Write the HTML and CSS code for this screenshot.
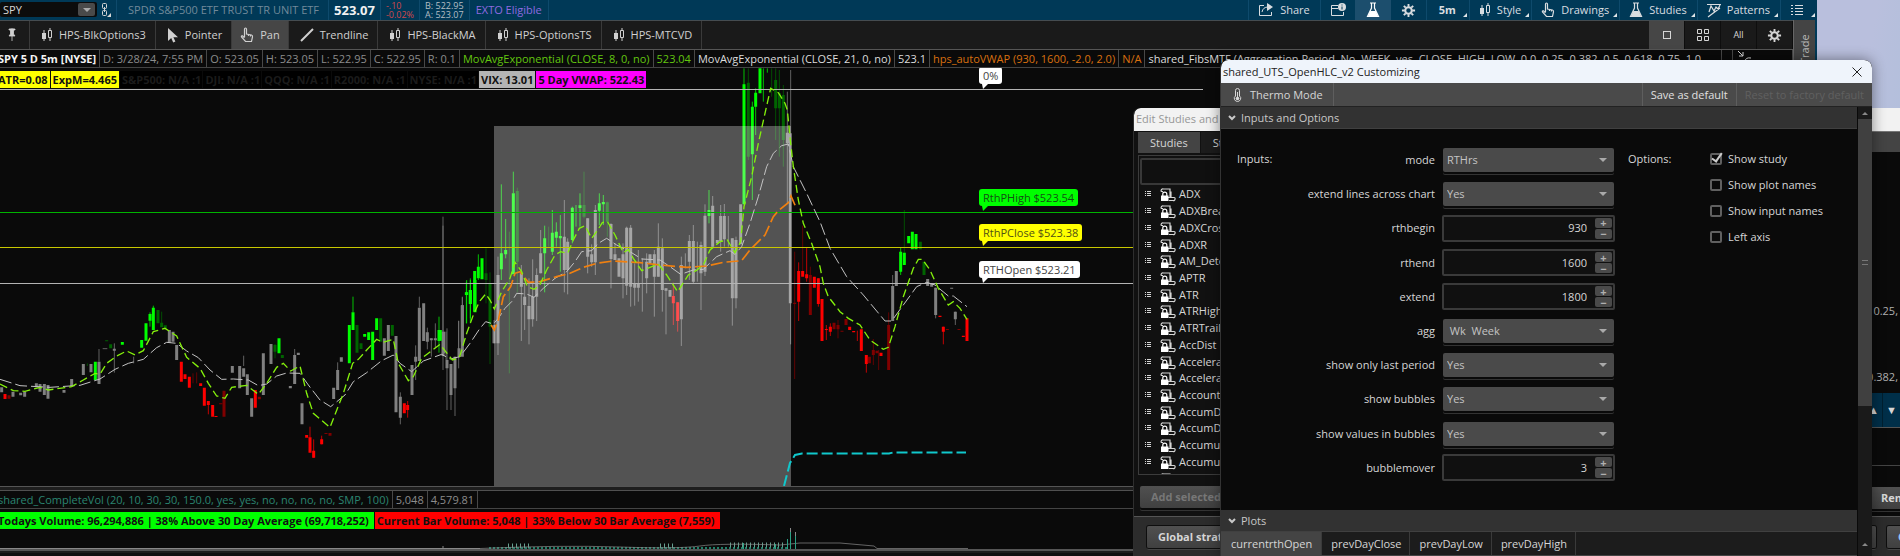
FILE: index.html
```html
<!DOCTYPE html>
<html lang="en">
<head>
<meta charset="utf-8">
<title>Charts</title>
<link rel="stylesheet" href="styles.css">
</head>
<body>
<svg class="defs" aria-hidden="true">
  <symbol id="candles" viewBox="0 0 12 14"><path d="M3 2v11M9 0v2M9 10v3" stroke="currentColor" fill="none"/><path d="M1 5h4v6H1z" fill="currentColor"/><path d="M7.500 2.500h3v7h-3z" fill="none" stroke="currentColor"/></symbol>
  <symbol id="hand" viewBox="0 0 14 16"><path d="M4.500 10V2.200q0-1.200 1-1.200t1 1.200V7l5 1q1.300.4 1 2l-1 4.500H5.500L1.500 10q-.5-1.500 1-1.200l2 2M8.500 7.300V9M10.500 7.800V9.500" fill="none" stroke="currentColor" stroke-width="1.200"/></symbol>
  <symbol id="flask" viewBox="0 0 14 16"><path d="M4 1h6M5.500 1v5L1.500 14.500h11L8.500 6V1" fill="none" stroke="currentColor" stroke-width="1.200"/><path d="M4.300 9h5.400l2.500 5.500H1.800z" fill="currentColor"/></symbol>
  <symbol id="gear" viewBox="0 0 16 16"><circle cx="8" cy="8" r="3.500" fill="none" stroke="currentColor" stroke-width="2.200"/><path d="M8 1v3M8 12v3M1 8h3M12 8h3M3 3l2 2M11 11l2 2M13 3l-2 2M5 11l-2 2" stroke="currentColor" stroke-width="2"/></symbol>
  <symbol id="list" viewBox="0 0 12 12"><path d="M0 1.500h2M4 1.500h8M0 4.500h2M4 4.500h8M0 7.500h2M4 7.500h8M0 10.500h2M4 10.500h8" stroke="currentColor"/></symbol>
  <symbol id="rows" viewBox="0 0 6 6"><path d="M0 .5h1M2 .5h4M0 2.500h1M2 2.500h4M0 4.500h1M2 4.500h4" stroke="currentColor"/></symbol>
  <symbol id="script" viewBox="0 0 16 14"><path d="M1 3.500q0-3 2.500-2.500h6.500v8M1 3.500h2M8 9.500h6q1.500 0 1 1.800t-2 1.200H9M10 4h1v5" fill="none" stroke="currentColor" stroke-width="1.200"/><path d="M1 7.500h7.500V13H1z" fill="#fff"/><path d="M2.800 8V6q0-1.800 2-1.800t2 1.800v2" fill="none" stroke="#fff" stroke-width="1.200"/></symbol>
</svg>

<main class="app">
  <header class="symbolbar">
    <div class="ticker">
      <input class="ticker-input" aria-label="Symbol" value="SPY">
      <button class="drop" aria-label="Choose symbol"></button>
    </div>
    <button class="link-btn" aria-label="Link color"><svg width="12" height="16" viewBox="0 0 12 16" fill="none" stroke="currentColor"><rect x="1.500" y="1.500" width="4" height="5" rx="1"/><rect x="1.500" y="8.500" width="4" height="5" rx="1"/><path d="M3.500 5v5"/><path d="M10 11v4H6z" fill="currentColor" stroke="none"/></svg></button>
    <div class="hcell name">SPDR S&amp;P500 ETF TRUST TR UNIT ETF</div>
    <div class="hcell last">523.07</div>
    <div class="hcell stack neg"><span>-.10</span><span>-0.02%</span></div>
    <div class="hcell stack quote"><span>B: 522.95</span><span>A: 523.07</span></div>
    <div class="hcell exto">EXTO Eligible</div>
    <nav class="tools">
      <button class="tool share"><svg width="16" height="14" viewBox="0 0 16 14" fill="none" stroke="currentColor"><path d="M6 2.500H1.500v10h12V9M4 9q1-5 6-5"/><path d="M9 0l6 4-6 4z" fill="currentColor" stroke="none"/></svg>Share</button>
      <button class="tool only" aria-label="News"><svg width="16" height="14" viewBox="0 0 16 14" fill="none" stroke="currentColor"><path d="M8 2.500H1.500v10h12V9M1 5.500h7"/><circle cx="12" cy="4" r="4" fill="currentColor" stroke="none"/><path d="M12 1.500v1M12 3.500v3" stroke="#003957"/></svg></button>
      <button class="tool only on" aria-label="Edit studies"><svg width="14" height="16"><use href="#flask"/></svg></button>
      <button class="tool only gear" aria-label="Settings"><svg width="15" height="15"><use href="#gear"/></svg></button>
      <button class="tool frame menu"><b>5m</b></button>
      <button class="tool menu"><svg width="12" height="14"><use href="#candles"/></svg>Style</button>
      <button class="tool menu"><svg width="14" height="16"><use href="#hand"/></svg>Drawings</button>
      <button class="tool menu"><svg width="14" height="16"><use href="#flask"/></svg>Studies</button>
      <button class="tool menu"><svg width="14" height="15" viewBox="0 0 14 15" fill="none" stroke="currentColor" stroke-width="1.200"><path d="M0 1.500h14M1 14L13 5M2 9l2-6 3 5 2-4 2 2 2-4"/></svg>Patterns</button>
      <button class="tool listbtn menu" aria-label="Menu"><svg width="12" height="12"><use href="#list"/></svg></button>
    </nav>
  </header>

  <div class="below">
    <div class="workspace">
      <div class="drawbar">
        <button class="dtool pin" aria-label="Pin"><svg width="8" height="14" viewBox="0 0 8 14"><path d="M1 1h6v1H1zM2.500 1h3v5l1.500 2H1l1.500-2zM4 8v5" fill="currentColor" stroke="currentColor" stroke-width=".8"/></svg></button>
        <button class="dtool"><svg width="12" height="14"><use href="#candles"/></svg>HPS-BlkOptions3</button>
        <button class="dtool"><svg width="12" height="15" viewBox="0 0 12 15"><path d="M1 0v13l3.200-3 2 4.500 2.200-1-2-4.300H11z" fill="currentColor"/></svg>Pointer</button>
        <button class="dtool pan"><svg width="14" height="16"><use href="#hand"/></svg>Pan</button>
        <button class="dtool trend"><svg width="14" height="14" viewBox="0 0 14 14"><path d="M1 13L13 1" stroke="currentColor" stroke-width="2"/></svg>Trendline</button>
        <button class="dtool"><svg width="12" height="14"><use href="#candles"/></svg>HPS-BlackMA</button>
        <button class="dtool"><svg width="12" height="14"><use href="#candles"/></svg>HPS-OptionsTS</button>
        <button class="dtool"><svg width="12" height="14"><use href="#candles"/></svg>HPS-MTCVD</button>
        <div class="views">
          <button class="view on" aria-label="Single chart"><svg width="8" height="8"><rect x=".5" y=".5" width="7" height="7" fill="none" stroke="currentColor"/></svg></button>
          <button class="view" aria-label="Chart grid"><svg width="12" height="12" fill="none" stroke="currentColor"><path d="M.5.5h4v4h-4zM7.500.5h4v4h-4zM.5 7.500h4v4h-4zM7.500 7.500h4v4h-4z"/></svg></button>
          <button class="view small">All</button>
          <button class="view" aria-label="Grid settings"><svg width="15" height="15"><use href="#gear"/></svg></button>
        </div>
      </div>

      <div class="info">
        <span class="cut title">SPY 5 D 5m [NYSE]</span><span>D: 3/28/24, 7:55 PM</span><span>O: 523.05</span><span>H: 523.05</span><span>L: 522.95</span><span>C: 522.95</span><span>R: 0.1</span><span class="lime">MovAvgExponential (CLOSE, 8, 0, no)</span><span class="lime">523.04</span><span class="white">MovAvgExponential (CLOSE, 21, 0, no)</span><span class="white">523.1</span><span class="orange">hps_autoVWAP (930, 1600, -2.0, 2.0)</span><span class="orange">N/A</span><span class="white fibs">shared_FibsMTF (Aggregation Period, No, WEEK, yes, CLOSE, HIGH, LOW, 0.0, 0.25, 0.382, 0.5, 0.618, 0.75, 1.0</span><span class="gap"></span><span class="collapse"><svg width="16" height="14" viewBox="0 0 16 14" fill="none" stroke="#ddd"><path d="M2 1l5 5M7 2v4H3M9 12q0-5 6-4"/></svg></span>
      </div>

      <section class="chart">
        <svg class="plot">
          <g transform="translate(0 -8) scale(.33333)">
            <g class="wick">
              <path class="k" d="M297 867V905M343 850V938M401 890V910M731 887V918M884 867V972M1013 907V990M1201 997V1093M1247 856V960M1258 710V743M1282 803V868M1294 835V890M1306 790V865M1329 470V930M1341 805V1050M1353 912V1050M1365 890V1068M1376 782V925M1387 710V735M308 866h14"/>
              <path class="g" d="M460 737V745M450 757V800M1059 710V757M1400 660V790M1411 660V775M1317 770V878"/>
              <path class="dg" d="M485 755V790M825 852V895M262 910v8"/>
              <path class="r" d="M625 1023V1063M930 1100V1132M941 1138V1193M965 1127V1153M1223 1023V1073"/>
              <path class="dr" d="M579 940V970M590 937V970"/>
            </g>
            <g class="body">
              <path class="k" d="M5 982V997M39 995V1010M62 998V1006M74 995V1010M109 970V982M120 972V995M133 972V1005M144 975V1016M192 990V998M215 957V978M250 912V945M273 912V937M297 905V972M343 866V872M508 810V848M519 815V845M530 855V900M697 918V938M719 918V985M731 925V950M742 943V1005M755 1015V1070M790 880V1005M813 852V912M871 978V985M884 885V972M895 878V885M906 1030V1093M1001 983V1017M1013 930V990M1024 892V905M1153 835V887M1165 795V873M1188 828V1057M1201 1010V1073M1236 915V1005M1247 890V905M1258 743V903M1271 730V843M1282 817V845M1329 815V888M1341 900V925M1353 912V1005M1365 890V985M1387 735V890M1306 835v6M1294 835v6"/>
              <path class="g" d="M286 905V960M367 846V854M425 840V863M438 790V842M450 762V782M460 743V810M837 835V880M1048 795V910M1059 757V810M1094 822V830M1106 817V840M1118 815V900M1130 775V810M1317 810V843M1400 697V705M1411 690V732M1425 660V757"/>
              <path class="dg" d="M332 853V865M474 750V790M485 788V802M496 796V805M847 885V894M1071 795V878M1083 850V867M1142 775V845M1177 795V827M825 855V875M320 841v3"/>
              <path class="r" d="M15 1002V1017M544 905V965M555 943V957M568 950V983M602 970V978M613 983V1037M625 1023V1035M638 1035V1070M648 1068v3M766 990V1043M920 1125V1133M930 1132V1178M941 1172V1193M965 1138V1153M1213 1030V1060M1223 1035V1050"/>
              <path class="dr" d="M672 992V1070M778 1010V1018M990 1119V1127M27 1006v10M978 1119v3M662 1030v3"/>
            </g>
          </g>
          <g transform="translate(440 -8) scale(.33333)">
            <g class="wick">
              <path class="k" d="M9 497V815M18 815V900M56 783V890M67 712V740M162 780V850M174 590V885M244 615V843M254 670V810M267 655V853M278 598V800M290 625V783M302 510V640M373 420V697M383 535V703M443 475V640M455 553V620M466 435V645M513 490V685M525 550V600M549 550V715M560 500V705M572 495V740M584 610V737M595 570V725M607 595V755M620 580V700M643 570V770M655 490V650M667 535V755M678 685V823M724 590V858M736 580V625M748 525V660M760 495V670M772 545V665M783 545V750M795 433V648M818 408V560M842 435V575M853 432V560M865 468V560M877 535V797M888 530V745M1042 95V430M1052 30V853"/>
              <path class="g" d="M79 665V790M91 655V790M115 583V660M184 373V660M197 477V595M220 335V400M314 497V697M337 450V585M349 487V560M361 465V635M397 440V550M408 435V500M420 400V500M478 400V495M490 405V495M807 390V490M912 25V433M937 125V420M947 85V225M970 25V125M982 25V38"/>
              <path class="dg" d="M138 565V730M150 637V912M208 515V940M232 383V697M326 500V560M432 335V475M502 425V530M925 25V300M995 25V110M1007 25V240M1018 30V290M1030 75V320"/>
              <path class="r" d="M700 668V795M713 727V815"/>
            </g>
            <g class="body">
              <path class="k" d="M67 737V845M11 815V880M57 865V890M162 795V850M174 645V850M244 640V680M254 710V735M267 738V778M278 710V778M290 645V710M302 580V640M373 530V630M383 545V630M443 475V590M455 583V607M466 450V607M513 492V597M525 583V600M537 595V650M549 583V655M560 503V677M572 503V680M584 672V683M595 672V683M620 605V655M630 583V610M643 583V650M655 560V650M667 565V690M690 690V710M678 685V692M724 615V778M748 543V605M760 543V665M783 555V640M795 467V635M818 437V560M832 540V550M842 468V543M853 468V538M877 535V715M888 540V715M902 433V553M1042 218V250M1051 220V730"/>
              <path class="g" d="M1 810V842M79 697V705M91 690V732M104 633V755M115 620V655M126 595V658M184 580V628M197 570V583M220 400V643M314 535V580M337 518V575M349 515V533M361 528V535M397 443V540M420 436V444M478 430V452M490 426V433M807 450V468M912 73V433M937 140V283M947 98V140M960 25V100"/>
              <path class="dg" d="M138 640V660M150 670V800M232 393V605M432 435V470M502 427V485M925 68V290M1007 60V145M1018 100V145M1030 105V240"/>
              <path class="r" d="M700 708V730M713 727V783"/>
            </g>
          </g>
          <g transform="translate(760 -8) scale(.33333)">
            <g class="wick">
              <path class="k" d="M398 645V783M586 755V795M527 683V775"/>
              <path class="g" d="M422 562V645"/>
              <path class="dg" d="M433 450V580"/>
              <path class="r" d="M116 607V783M140 562V665M175 655V740M199 795V840M211 790V828M292 812V843M319 885V938M550 800V853"/>
              <path class="dr" d="M104 575V957M128 497V633M151 620V765M234 780V835M340 837V915M356 870V930M386 757V900"/>
            </g>
            <g class="body">
              <path class="k" d="M398 678V783M409 633V678M503 657V678M515 672v8M527 683V765M575 683v3M586 755V778"/>
              <path class="g" d="M422 575V635M433 578V615M446 528V550M457 515V568M468 522V568"/>
              <path class="dg" d="M481 545V568M492 605V645"/>
              <path class="r" d="M116 633V725M128 633V650M140 643V655M163 650V683M175 655V732M186 717V843M199 807v3M211 800V815M269 800V810M281 813v4M304 808V873M319 885V912M363 878V888M540 767v4M550 800V815M610 827v4M621 775V843"/>
              <path class="dr" d="M104 728v4M151 645V765M222 788V808M234 795V808M246 812v3M258 777V795M328 890V910M340 870V885M351 872V880M386 795V930M562 807v3M597 807v3"/>
            </g>
          </g>
          <rect class="session" x="494" y="58" width="297" height="360"/>
          <path class="lw" d="M0 21.500H1203"/>
          <line class="lg" x1="0" x2="100%" y1="144.500" y2="144.500"/>
          <line class="ly" x1="0" x2="100%" y1="179.500" y2="179.500"/>
          <line class="lw" x1="0" x2="100%" y1="215.500" y2="215.500"/>
          <g class="avg" transform="translate(0 -8) scale(.33333)">
            <polyline class="slow" points="0,958 60,977 150,982 240,976 300,957 345,928 385,910 430,898 470,863 500,847 530,850 560,873 595,893 630,930 665,958 700,957 745,960 775,977 800,972 830,948 860,939 900,940 925,975 960,1020 992,1040 1035,1005 1060,965 1100,938 1145,902 1180,885 1200,910 1235,935 1270,903 1325,883 1350,897 1380,890 1410,850 1440,805 1457,785 1480,792 1495,775 1515,745 1535,725 1550,700 1580,702 1602,712 1630,685 1665,655 1700,635 1725,605 1745,575 1775,572 1795,550 1820,535 1850,555 1890,575 1925,597 1980,600 2010,620 2042,643 2080,630 2110,628 2150,590 2190,572 2205,583 2225,560 2250,490 2275,410 2300,320 2320,280 2345,257 2365,252 2380,320 2420,400 2460,485 2490,565 2540,650 2590,705 2655,783 2675,783 2710,735 2750,680 2780,667 2805,675 2845,708 2860,708 2901,740"/>
            <polyline class="vwap" points="1473,795 1483,810 1495,780 1510,710 1532,680 1545,640 1560,635 1585,667 1620,665 1670,650 1710,640 1750,622 1790,610 1840,603 1920,608 1980,615 2060,622 2120,618 2170,607 2225,602 2250,570 2295,525 2320,470 2335,452 2365,428 2373,408 2387,440"/>
            <polyline class="fast" points="0,972 40,992 75,994 120,982 145,990 215,980 250,960 285,940 300,943 320,910 350,888 380,873 405,885 430,872 460,815 495,805 530,828 560,892 600,925 625,970 650,1008 675,1015 695,982 740,976 775,1003 800,970 830,922 850,910 872,933 900,918 920,1000 940,1060 990,1102 1030,1000 1058,910 1075,898 1100,870 1130,838 1148,847 1180,838 1195,910 1225,962 1240,950 1265,895 1320,853 1357,900 1378,893 1400,820 1420,765 1438,725 1457,702 1470,720 1483,747 1505,695 1530,655 1545,607 1565,635 1582,680 1602,688 1618,678 1640,630 1665,585 1682,575 1703,580 1720,540 1738,505 1755,497 1775,535 1790,515 1807,488 1822,484 1845,525 1870,578 1885,568 1900,595 1925,632 1950,622 1975,612 2000,645 2033,695 2065,645 2088,632 2110,615 2130,570 2160,545 2182,540 2205,578 2222,545 2232,440 2255,350 2275,250 2295,160 2312,85 2335,98 2355,130 2362,150 2371,240 2380,320 2395,420 2410,490 2435,550 2460,620 2470,670 2485,710 2520,755 2545,775 2580,795 2610,840 2650,868 2665,862 2685,800 2710,710 2740,625 2755,598 2767,598 2790,630 2815,685 2845,735 2860,725 2880,745 2901,778"/>
          </g>
          <path class="cyan" d="M784 418L790 395L795 387L802 385.500H889L893 384.500H966"/>
        </svg>
        <div class="bubble b0">0%</div>
        <div class="bubble b1">RthPHigh $523.54</div>
        <div class="bubble b2">RthPClose $523.38</div>
        <div class="bubble b3">RTHOpen $523.21</div>
        <div class="chips">
          <span class="chip yellow cut">ATR=0.08</span><span class="chip yellow">ExpM=4.465</span><span class="chip dark">S&amp;P500: N/A :1</span><span class="chip dark">DJI: N/A :1</span><span class="chip dark">QQQ: N/A :1</span><span class="chip dark">R2000: N/A :1</span><span class="chip dark">NYSE: N/A :1</span><span class="chip silver">VIX: 13.01</span><span class="chip magenta">5 Day VWAP: 522.43</span>
        </div>
      </section>

      <div class="splitter"></div>
      <div class="info">
        <span class="cut teal">shared_CompleteVol (20, 10, 30, 30, 150.0, yes, yes, no, no, no, no, SMP, 100)</span><span>5,048</span><span>4,579.81</span>
      </div>
      <section class="volume">
        <svg class="plot">
          <g fill="none">
            <path d="M489 39h300" stroke="#1f7f68" stroke-width="2" stroke-dasharray="2 2"/>
            <path d="M508 37h24M660 37h16M730 36h54" stroke="#66a090" stroke-width="5" stroke-dasharray="1 3"/>
            <path d="M480 39.500Q560 36 620 38T700 37T780 36L800 34H840L874 37L877 39.500H968" stroke="#8a8a8a" opacity=".7"/>
            <path d="M743.500 34v6M775.500 35v5M787.500 30v10M790.500 19v21M795.500 23v17" stroke="#2aa184"/>
            <path d="M790.500 19v4M795.500 23v4M0 39.500h480M443 39v-2" stroke="#888"/>
          </g>
        </svg>
        <div class="chips">
          <span class="chip green cut">Todays Volume: 96,294,886 | 38% Above 30 Day Average (69,718,252)</span><span class="chip red">Current Bar Volume: 5,048 | 33% Below 30 Bar Average (7,559)</span>
        </div>
      </section>
      <div class="axis"></div>
    </div>
    <aside class="rail"><span>Trade</span></aside>
  </div>
</main>

<section class="studies">
  <h2 class="titlebar">Edit Studies and Strategies</h2>
  <div class="studies-body">
    <div class="catalog">
      <div class="stabs"><button class="stab on">Studies</button><button class="stab">Strategies</button></div>
      <div class="picker">
        <input class="search" aria-label="Search studies">
        <ul class="names">
          <li><svg width="6" height="6"><use href="#rows"/></svg><svg width="16" height="14"><use href="#script"/></svg>ADX</li>
          <li><svg width="6" height="6"><use href="#rows"/></svg><svg width="16" height="14"><use href="#script"/></svg>ADXBreakouts</li>
          <li><svg width="6" height="6"><use href="#rows"/></svg><svg width="16" height="14"><use href="#script"/></svg>ADXCrossover</li>
          <li><svg width="6" height="6"><use href="#rows"/></svg><svg width="16" height="14"><use href="#script"/></svg>ADXR</li>
          <li><svg width="6" height="6"><use href="#rows"/></svg><svg width="16" height="14"><use href="#script"/></svg>AM_Detector</li>
          <li><svg width="6" height="6"><use href="#rows"/></svg><svg width="16" height="14"><use href="#script"/></svg>APTR</li>
          <li><svg width="6" height="6"><use href="#rows"/></svg><svg width="16" height="14"><use href="#script"/></svg>ATR</li>
          <li><svg width="6" height="6"><use href="#rows"/></svg><svg width="16" height="14"><use href="#script"/></svg>ATRHighLow</li>
          <li><svg width="6" height="6"><use href="#rows"/></svg><svg width="16" height="14"><use href="#script"/></svg>ATRTrailing</li>
          <li><svg width="6" height="6"><use href="#rows"/></svg><svg width="16" height="14"><use href="#script"/></svg>AccDist</li>
          <li><svg width="6" height="6"><use href="#rows"/></svg><svg width="16" height="14"><use href="#script"/></svg>Acceleration</li>
          <li><svg width="6" height="6"><use href="#rows"/></svg><svg width="16" height="14"><use href="#script"/></svg>Acceleration</li>
          <li><svg width="6" height="6"><use href="#rows"/></svg><svg width="16" height="14"><use href="#script"/></svg>Account</li>
          <li><svg width="6" height="6"><use href="#rows"/></svg><svg width="16" height="14"><use href="#script"/></svg>AccumDist</li>
          <li><svg width="6" height="6"><use href="#rows"/></svg><svg width="16" height="14"><use href="#script"/></svg>AccumDist</li>
          <li><svg width="6" height="6"><use href="#rows"/></svg><svg width="16" height="14"><use href="#script"/></svg>Accumulation</li>
          <li><svg width="6" height="6"><use href="#rows"/></svg><svg width="16" height="14"><use href="#script"/></svg>Accumulation</li>
          <li><svg width="6" height="6"><use href="#rows"/></svg><svg width="16" height="14"><use href="#script"/></svg>Adaptive</li>
        </ul>
      </div>
      <button class="push add" disabled>Add selected</button>
    </div>
    <div class="applied">
      <div class="applied-head"></div>
      <div class="applied-list"><span>0.25,</span><span>0.382,</span></div>
      <div class="mover"><button aria-label="Move up">▲</button><button aria-label="Move down">▼</button></div>
      <div class="detail"></div>
      <button class="push">Remove</button>
    </div>
  </div>
  <footer class="studies-foot"><button class="push">Global strategy settings...</button><span class="foot-right"><button class="push">OK</button><button class="push blue">Cancel</button></span></footer>
</section>

<section class="dialog" role="dialog" aria-labelledby="dlg-title">
  <div class="titlebar dlg-titlebar"><h2 id="dlg-title">shared_UTS_OpenHLC_v2 Customizing</h2><button class="close" aria-label="Close"><svg width="10" height="10" viewBox="0 0 10 10"><path d="M.5.5l9 9M9.500.5l-9 9" stroke="#222" fill="none"/></svg></button></div>
  <div class="dlg-tools">
    <button class="dt thermo"><svg width="9" height="14" viewBox="0 0 9 14" fill="none" stroke="currentColor"><path d="M2.500 8V2.500q0-2 2-2t2 2V8q2 1.500 1 3.500-1 2-3 2t-3-2q-1-2 1-3.500z"/><path d="M4.500 4v6"/><circle cx="4.500" cy="10.500" r="1.800" fill="currentColor" stroke="none"/></svg>Thermo Mode</button>
    <button class="dt save">Save as default</button>
    <button class="dt reset" disabled>Reset to factory default</button>
  </div>
  <div class="dlg-main">
    <div class="dlg-content">
      <h3 class="group"><svg width="8" height="6" viewBox="0 0 8 6"><path d="M1 1l3 3 3-3" stroke="currentColor" stroke-width="2" fill="none"/></svg>Inputs and Options</h3>
      <div class="form">
        <div class="caption">Inputs:</div>
        <div class="inputs">
          <label for="mode">mode</label><span class="sel"><select id="mode"><option>RTHrs</option></select></span>
          <label for="ext">extend lines across chart</label><span class="sel"><select id="ext"><option>Yes</option></select></span>
          <label for="rb">rthbegin</label><span class="num"><input id="rb" value="930"><button aria-label="Increase">+</button><button aria-label="Decrease">−</button></span>
          <label for="re">rthend</label><span class="num"><input id="re" value="1600"><button aria-label="Increase">+</button><button aria-label="Decrease">−</button></span>
          <label for="ex">extend</label><span class="num"><input id="ex" value="1800"><button aria-label="Increase">+</button><button aria-label="Decrease">−</button></span>
          <label for="agg">agg</label><span class="sel"><select id="agg"><option>&nbsp;Wk&nbsp;&nbsp;Week</option></select></span>
          <label for="lastp">show only last period</label><span class="sel"><select id="lastp"><option>Yes</option></select></span>
          <label for="sb">show bubbles</label><span class="sel"><select id="sb"><option>Yes</option></select></span>
          <label for="sv">show values in bubbles</label><span class="sel"><select id="sv"><option>Yes</option></select></span>
          <label for="bm">bubblemover</label><span class="num"><input id="bm" value="3"><button aria-label="Increase">+</button><button aria-label="Decrease">−</button></span>
        </div>
        <div class="caption opt">Options:</div>
        <div class="checks">
          <label><input type="checkbox" checked>Show study</label>
          <label><input type="checkbox">Show plot names</label>
          <label><input type="checkbox">Show input names</label>
          <label><input type="checkbox">Left axis</label>
        </div>
      </div>
      <h3 class="group plots"><svg width="8" height="6" viewBox="0 0 8 6"><path d="M1 1l3 3 3-3" stroke="currentColor" stroke-width="2" fill="none"/></svg>Plots</h3>
      <div class="ptabs"><button class="on">currentrthOpen</button><button>prevDayClose</button><button>prevDayLow</button><button>prevDayHigh</button></div>
    </div>
    <div class="scroll"><i class="tri"></i><div class="thumb"><i></i></div><div class="rest"><i class="tri"></i></div></div>
  </div>
</section>
</body>
</html>
```
FILE: styles.css
```css
* { box-sizing: border-box; }
body {
  margin: 0;
  height: 100vh;
  position: relative;
  overflow: hidden;
  background: linear-gradient(100deg, #b9bfdd 94%, #b1bfdb 97%, #bcc6e0);
  font: 11px/16px "Open Sans", "Noto Sans", sans-serif;
  color: #d6d6d6;
}
button, input, select { font: inherit; color: inherit; border: 0; margin: 0; padding: 0; background: none; }
h2, h3 { margin: 0; font: inherit; }
.defs { position: absolute; width: 0; height: 0; }

/* main chart window */
.app {
  height: 100%;
  margin-right: 83px;
  display: flex;
  flex-direction: column;
  background: #0a0a0a;
}
.symbolbar { display: flex; height: 20px; background: #003957; }
.ticker {
  display: flex;
  width: 97px;
  height: 15px;
  margin-top: 2px;
  padding: 1px;
  background: #0c0c0c;
  border-radius: 2px;
}
.ticker-input { width: 77px; padding-left: 2px; }
.drop { width: 17px; background: #4a4a4a; display: grid; place-items: center; border-radius: 2px; }
.drop::after, .sel::after { content: ""; border: 4px solid transparent; border-top-color: #aaa; border-bottom: 0; }
.link-btn { width: 19px; padding-left: 4px; display: flex; align-items: center; }
.hcell { display: flex; align-items: center; padding: 0 5px; border-left: 1px solid #0e4a6c; white-space: nowrap; }
.name { color: #71899a; padding: 0 9px 0 11px; }
.last { font-size: 13px; font-weight: 700; color: #f2f2f2; }
.stack { flex-direction: column; justify-content: center; align-items: flex-start; font-size: 9px; line-height: 9px; }
.neg { color: #d0484c; }
.quote { color: #b5bec4; }
.exto { color: #8f6ae0; padding: 0 6px; border-right: 1px solid #0e4a6c; }
.tools { margin-left: auto; display: flex; color: #d9dde0; }
.tool { position: relative; display: flex; align-items: center; gap: 6px; padding: 0 10px 0 9px; border-left: 1px solid #0e4a6c; }
.tool svg { flex: none; }
.only { padding: 0 9px; }
.only.on { background: #1c4e6d; color: #fff; padding: 0 11px; border: 0; }
.only.gear { padding: 0 10px; border: 0; }
.frame { padding: 0 13px 0 12px; }
.listbtn { padding: 0 14px 0 10px; }
.menu::after { content: ""; position: absolute; right: 2px; bottom: 3px; border: 2px solid #dfe5e8; border-top-color: transparent; border-left-color: transparent; }

.below { flex: 1; display: flex; min-height: 0; }
.workspace { flex: 1; min-width: 0; display: flex; flex-direction: column; }
.rail { width: 24px; background: #444; border-left: 1px solid #666; border-right: 2px solid #003957; display: flex; justify-content: center; padding-top: 12px; }
.rail span { writing-mode: vertical-rl; transform: rotate(180deg); height: 32px; color: #b8b8b8; }

.drawbar { display: flex; flex: none; height: 30px; background: #1a1a1a; border-top: 1px solid #454c50; border-bottom: 1px solid #555; }
.dtool { display: flex; align-items: center; gap: 6px; padding: 0 9px 0 11px; border-right: 1px solid #3a3a3a; color: #d0d0d0; white-space: nowrap; }
.dtool svg { flex: none; }
.pin { padding: 0 13px 0 8px; }
.pan { background: #464646; padding: 0 8px; }
.views { margin-left: auto; display: flex; }
.view { width: 36px; display: grid; place-items: center; border-right: 1px solid #0e0e0e; }
.view.on { background: #464646; }
.small { font-size: 9px; }

.info { flex: none; display: flex; height: 18px; border-bottom: 1px solid #444; line-height: 17px; color: #8c8c8c; white-space: nowrap; overflow: hidden; }
.info span { padding: 0 3px; border-right: 1px solid #484848; }
.info .cut, .chip.cut { padding-left: 0; text-indent: -2px; }
.title { font-weight: 700; color: #f4f4f4; }
.info .lime { color: #62c60f; }
.info .white { color: #dcdcdc; }
.info .orange { color: #d9700f; }
.info .teal { color: #2b8571; }
.info .fibs { flex: 1; }
.info .gap { width: 11px; padding: 0; }
.info .collapse { width: 60px; }

.chart { position: relative; flex: 1; min-height: 0; overflow: hidden; }
.plot { position: absolute; inset: 0; width: 100%; height: 100%; }
.wick { stroke-width: 3; opacity: .75; }
.body { stroke-width: 9; }
.k { stroke: #808080; fill: none; }
.g { stroke: #00ff00; fill: none; }
.dg { stroke: #006400; fill: none; }
.r { stroke: #ff0000; fill: none; }
.dr { stroke: #800000; fill: none; }
.session { fill: #fff; fill-opacity: .3; }
.lw { stroke: #b4b4b4; }
.lg { stroke: #00b400; }
.ly { stroke: #c8c800; }
.avg { fill: none; }
.slow { stroke: #c4c4c4; stroke-width: 3; stroke-dasharray: 36 12; }
.fast { stroke: #84f00c; stroke-width: 4; stroke-dasharray: 24 12; }
.vwap { stroke: #f08010; stroke-width: 5; stroke-dasharray: 36 12; }
.cyan { fill: none; stroke: #10c8cc; stroke-width: 2; stroke-dasharray: 11 4; }

.chips { position: relative; display: flex; gap: 1px; padding-top: 3px; font-weight: 700; line-height: 17px; white-space: nowrap; }
.chip { padding: 0 2px; color: #111; }
.volume .chip { padding-right: 5px; }
.yellow { background: #ff0; }
.dark { background: #000; color: #1b1b1b; padding-right: 1px; }
.silver { background: #b4b4b4; }
.magenta { background: #f0f; }
.green { background: #0f0; }
.red { background: #f00; }
.bubble { position: absolute; left: 979px; padding: 0 4px; line-height: 17px; border-radius: 3px; background: #fff; color: #444; white-space: nowrap; }
.bubble::after { content: ""; position: absolute; left: 3px; top: 100%; border: 5px solid transparent; border-top-color: inherit; border-left: 1px solid transparent; border-bottom: 0; }
.b0 { top: -1px; border-color: #fff; }
.b1 { top: 121px; background: #0f0; border-color: #0f0; color: #145014; }
.b2 { top: 156px; background: #ff0; border-color: #ff0; color: #505014; }
.b3 { top: 193px; border-color: #fff; }

.splitter { flex: none; height: 5px; background: #1e1e1e; border-top: 1px solid #555; border-bottom: 1px solid #505050; }
.volume { position: relative; flex: none; height: 40px; overflow: hidden; }
.axis { flex: none; height: 7px; background: #1c1c1c; border-top: 2px solid #555; border-bottom: 3px solid #101010; }

/* windows stacked over the chart */
.titlebar { height: 23px; line-height: 22px; padding-left: 2px; border-radius: 7px 7px 0 0; white-space: nowrap; }
.studies {
  position: absolute;
  top: 108px;
  bottom: 0;
  left: 1133px;
  right: 0;
  display: flex;
  flex-direction: column;
  overflow: hidden;
  background: #111;
  border-left: 1px solid #2e2e2e;
  border-radius: 7px 0 0 0;
}
.studies > .titlebar { flex: none; background: #f2f2f2; color: #979797; border-radius: 7px 0 0 0; }
.studies-body { flex: 1; display: flex; min-height: 0; }
.catalog { flex: 1; padding: 1px 0 0 4px; display: flex; flex-direction: column; }
.stabs { display: flex; height: 21px; }
.stab { padding: 0 12px; background: #1c1c1c; margin-right: 1px; }
.stab.on { background: #444; }
.picker { margin-top: 2px; height: 320px; border: 1px solid #3c3c3c; overflow: hidden; }
.search { display: block; width: 96%; height: 27px; margin: 2px 1px 1px; border: 2px solid #383838; border-radius: 2px; background: #101010; }
.names { list-style: none; margin: 0; padding: 0 0 0 6px; display: grid; height: 301px; grid-template-rows: repeat(18, 1fr); }
.names li { display: flex; align-items: center; color: #d6d6d6; }
.names svg { flex: none; }
.names svg + svg { margin: 2px 3px 0 9px; }
.push { height: 22px; padding: 0 11px; background: linear-gradient(#505050, #404040); border-radius: 2px; font-weight: 700; color: #d6d6d6; white-space: nowrap; box-shadow: 0 2px 0 #0a0a0a, 0 3px 0 #333; }
.add { margin: 11px 0 0 2px; width: 400px; text-align: left; color: #777; }
.applied { width: 28px; display: flex; flex-direction: column; overflow: hidden; background: #0a0a0a; }
.applied-head { flex: none; height: 21px; background: #444; border-top: 1px solid #777; }
.applied-list { height: 241px; padding-bottom: 8px; display: flex; flex-direction: column; justify-content: flex-end; align-items: flex-end; gap: 50px; color: #b0b0b0; }
.applied-list span { padding-right: 2px; }
.mover { flex: none; display: flex; justify-content: flex-end; height: 35px; background: #002f49; border-bottom: 1px solid #555; }
.mover button { width: 18px; flex: none; border-left: 1px solid #001f30; }
.detail { flex: none; height: 38px; border-bottom: 1px solid #444; margin-bottom: 21px; }
.applied .push { flex: none; text-align: left; padding-left: 9px; border-radius: 0; }
.studies-foot { flex: none; display: flex; justify-content: space-between; align-items: flex-start; height: 40px; padding: 9px 0 0 13px; background: #2c2c2c; border-top: 1px solid #555; }
.studies-foot .push { box-shadow: 0 0 0 1px #0e0e0e, 0 2px 0 #444; }
.foot-right { display: flex; gap: 11px; width: 60px; }
.foot-right .push { width: 36px; flex: none; }
.blue { color: #9cc4f4; text-align: left; }

.dialog {
  position: absolute;
  top: 60px;
  bottom: 0;
  left: 1220px;
  width: 652px;
  display: flex;
  flex-direction: column;
  background: #0a0a0a;
  border-left: 1px solid #333;
  border-radius: 8px 8px 0 0;
  overflow: hidden;
  box-shadow: 0 0 14px rgba(0, 0, 0, .45);
}
.dlg-titlebar { flex: none; display: flex; justify-content: space-between; align-items: center; background: #eff4fb; color: #222; padding-right: 10px; }
.close { display: flex; }
.dlg-tools { flex: none; display: flex; height: 24px; background: #4a4a4a; border-bottom: 1px solid #222; }
.dt { padding: 0 8px; border-left: 1px solid #5e5e5e; white-space: nowrap; }
.thermo { display: flex; align-items: center; gap: 8px; padding: 0 10px 0 12px; border-left: 0; border-right: 1px solid #5e5e5e; }
.save { margin-left: auto; color: #e0e0e0; }
.reset { color: #606060; }
.dlg-main { flex: 1; display: flex; min-height: 0; }
.dlg-content { flex: 1; display: flex; flex-direction: column; margin-right: 1px; }
.group { flex: none; display: flex; align-items: center; gap: 5px; height: 22px; padding-left: 7px; background: #323232; border-bottom: 1px solid #404040; color: #c8c8c8; }
.form { flex: 1; display: flex; padding: 14px 0 0 16px; }
.caption { width: 40px; padding-top: 8px; }
.inputs { display: grid; grid-template-columns: 158px 173px; column-gap: 7px; grid-template-rows: repeat(10, 1fr); height: 342px; align-items: center; }
.inputs label { text-align: right; white-space: nowrap; }
.sel { display: flex; align-items: center; position: relative; height: 24px; margin: 0 1px; background: #4a4a4a; border-radius: 2px; box-shadow: 0 2px 0 #0a0a0a, 0 3px 0 #333; }
.sel select { appearance: none; width: 100%; height: 24px; padding-left: 4px; color: #c4c4c4; }
.sel::after { position: absolute; right: 7px; }
.num { display: grid; grid-template-columns: 1fr 17px; grid-template-rows: 10px 10px; gap: 1px 8px; height: 27px; padding: 1px; border: 2px solid #3a3a3a; border-radius: 2px; background: #101010; }
.num input { grid-row: 1 / 3; width: 100%; text-align: right; }
.num button { background: #4a4a4a; border-radius: 2px; font-weight: 700; line-height: 9px; color: #b0b0b0; }
.opt { width: 82px; margin-left: 13px; }
.checks { display: flex; flex-direction: column; gap: 10px; padding-top: 8px; }
.checks label { display: flex; align-items: center; gap: 6px; }
.checks input { appearance: none; position: relative; width: 12px; height: 12px; border: 2px solid #606060; border-radius: 2px; }
.checks input:checked::after { content: ""; position: absolute; left: 2px; top: -4px; width: 4px; height: 9px; border: solid #ccc; border-width: 0 2px 2px 0; transform: rotate(35deg); }
.ptabs { flex: none; display: flex; height: 24px; background: #1c1c1c; border-bottom: 1px solid #444; }
.ptabs button { padding: 0 8px 0 9px; border-right: 1px solid #3a3a3a; }
.ptabs .on { background: #444; padding: 0 9px 0 10px; }
.scroll { width: 14px; display: flex; flex-direction: column; align-items: center; background: #1a1a1a; }
.tri { border: 3px solid transparent; border-bottom-color: #888; border-top: 0; }
.scroll > .tri { margin: 5px 0 4px; }
.thumb { width: 100%; height: 287px; background: #404040; display: grid; place-items: center; }
.thumb i { width: 6px; height: 5px; border: solid #777; border-width: 1px 0; }
.rest { flex: 1; display: flex; align-items: flex-end; padding-bottom: 10px; }
```
